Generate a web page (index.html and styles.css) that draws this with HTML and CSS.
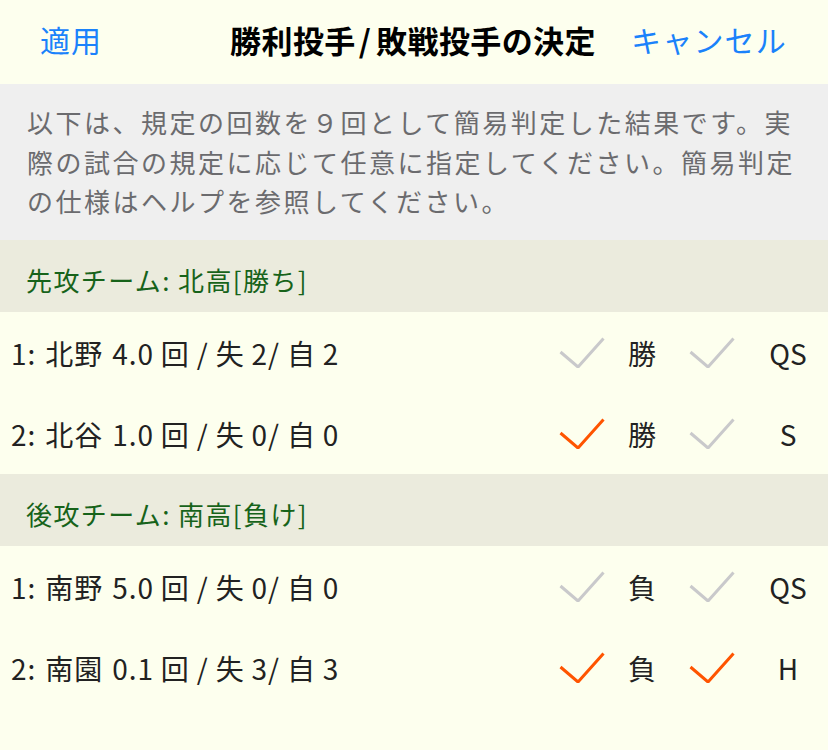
FILE: index.html
```html
<!DOCTYPE html>
<html lang="ja">
<head>
<meta charset="utf-8">
<link rel="stylesheet" href="styles.css">
</head>
<body>
<div class="nav">
  <span class="nav-btn left">適用</span>
  <span class="nav-title">勝利投手<span class="slash">/</span>敗戦投手の決定</span>
  <span class="nav-btn right">キャンセル</span>
</div>
<div class="notice">以下は、規定の回数を９回として簡易判定した結果です。実際の試合の規定に応じて任意に指定してください。簡易判定の仕様はヘルプを参照してください。</div>

<div class="section-header">先攻チーム: 北高[勝ち]</div>
<div class="row">
  <span class="pitcher">1: 北野 4.0<span class="k">回</span>/<span class="k">失</span>2/<span class="k">自</span>2</span>
  <div class="marks">
    <svg class="check off" viewBox="0 0 46 31"><polyline points="1.5,15 19,30 44.5,1.5"/></svg>
    <span class="lbl1">勝</span>
    <svg class="check off second" viewBox="0 0 46 31"><polyline points="1.5,15 19,30 44.5,1.5"/></svg>
    <span class="lbl2">QS</span>
  </div>
</div>
<div class="row">
  <span class="pitcher">2: 北谷 1.0<span class="k">回</span>/<span class="k">失</span>0/<span class="k">自</span>0</span>
  <div class="marks">
    <svg class="check on" viewBox="0 0 46 31"><polyline points="1.5,15 19,30 44.5,1.5"/></svg>
    <span class="lbl1">勝</span>
    <svg class="check off second" viewBox="0 0 46 31"><polyline points="1.5,15 19,30 44.5,1.5"/></svg>
    <span class="lbl2">S</span>
  </div>
</div>

<div class="section-header">後攻チーム: 南高[負け]</div>
<div class="row">
  <span class="pitcher">1: 南野 5.0<span class="k">回</span>/<span class="k">失</span>0/<span class="k">自</span>0</span>
  <div class="marks">
    <svg class="check off" viewBox="0 0 46 31"><polyline points="1.5,15 19,30 44.5,1.5"/></svg>
    <span class="lbl1">負</span>
    <svg class="check off second" viewBox="0 0 46 31"><polyline points="1.5,15 19,30 44.5,1.5"/></svg>
    <span class="lbl2">QS</span>
  </div>
</div>
<div class="row">
  <span class="pitcher">2: 南園 0.1<span class="k">回</span>/<span class="k">失</span>3/<span class="k">自</span>3</span>
  <div class="marks">
    <svg class="check on" viewBox="0 0 46 31"><polyline points="1.5,15 19,30 44.5,1.5"/></svg>
    <span class="lbl1">負</span>
    <svg class="check on second" viewBox="0 0 46 31"><polyline points="1.5,15 19,30 44.5,1.5"/></svg>
    <span class="lbl2">H</span>
  </div>
</div>
</body>
</html>
```

FILE: styles.css
```css
html, body {
  margin: 0;
  padding: 0;
  background: #fdffee;
  font-family: "Noto Sans CJK JP", "Noto Sans", sans-serif;
}
body {
  width: 828px;
  height: 750px;
  overflow: hidden;
}
.nav {
  height: 84px;
  display: grid;
  grid-template-columns: 1fr auto 1fr;
  align-items: center;
  padding: 0 42px 6px 40px;
  box-sizing: border-box;
  background: #fdffee;
}
.nav-btn {
  color: #1a82fb;
  font-size: 30px;
  line-height: 1;
  letter-spacing: 1px;
}
.nav-btn.right {
  justify-self: end;
  letter-spacing: 1.2px;
  margin-right: -1px;
}
.nav-title {
  font-weight: bold;
  font-size: 31px;
  line-height: 1;
  color: #000;
  letter-spacing: 0.4px;
}
.slash {
  margin: 0 5px 0 3px;
}
.notice {
  background: #efefef;
  color: #6b6b6e;
  font-size: 26px;
  letter-spacing: 2.5px;
  line-height: 39.5px;
  padding: 18px 10px 19px 27px;
  height: 156px;
  box-sizing: border-box;
}
.section-header {
  height: 72px;
  background: #ebebdd;
  color: #17631a;
  font-size: 26px;
  letter-spacing: 1.4px;
  display: flex;
  align-items: center;
  padding: 6px 0 0 26px;
  box-sizing: border-box;
}
.row {
  height: 81px;
  display: flex;
  align-items: center;
  justify-content: space-between;
  padding-left: 11px;
  padding-right: 10px;
  box-sizing: border-box;
  color: #222;
  font-size: 28px;
}
.pitcher {
  letter-spacing: 0.9px;
  word-spacing: 2px;
}
.k {
  margin: 0 7px;
}
.marks {
  display: flex;
  align-items: center;
}
.check {
  width: 46px;
  height: 31px;
  fill: none;
  stroke-width: 3;
}
.check.off { stroke: #c9c9cb; }
.check.on { stroke: #ff5400; }
.check.second { margin-left: 10px; }
.lbl1 {
  width: 74px;
  text-align: center;
}
.lbl2 {
  width: 60px;
  margin-left: 23px;
  text-align: center;
}
```
